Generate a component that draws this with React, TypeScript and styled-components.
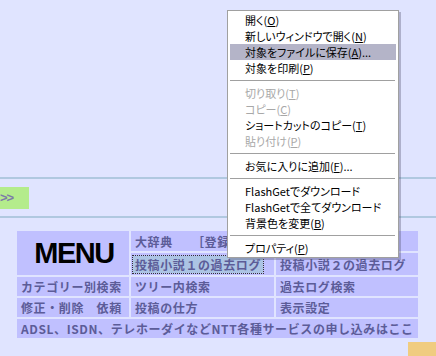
import styled, { createGlobalStyle } from "styled-components";

const GlobalStyle = createGlobalStyle`
  html, body {
    margin: 0;
    padding: 0;
    background: #e0e4ff;
  }
`;

const Page = styled.div`
  position: relative;
  width: 436px;
  height: 356px;
  overflow: hidden;
  background: #e0e4ff;
  font-family: "Noto Sans CJK JP", "Noto Sans", sans-serif;
`;

const TopSpace = styled.div`
  height: 177px;
`;

const Rule = styled.div<{ $gap: number }>`
  height: 2px;
  background: #b0c8e0;
  margin-bottom: ${({ $gap }) => $gap}px;
`;

const NavBar = styled.div`
  display: flex;
  margin-bottom: 7px;
`;

const NextTab = styled.div`
  width: 29px;
  height: 22px;
  background: #b4ec8c;
  color: #7c7ca8;
  font-family: "Liberation Sans", Arial, sans-serif;
  font-size: 13px;
  font-weight: bold;
  line-height: 22px;
  letter-spacing: -1px;
`;

const MenuGrid = styled.div`
  display: grid;
  grid-template-columns: 112px 143px 142px;
  grid-template-rows: 20px 22px 19px 19px 19px;
  gap: 2px;
  margin-left: 17px;
`;

const Cell = styled.div<{ $span?: number }>`
  grid-column: span ${({ $span }) => $span || 1};
  display: flex;
  align-items: center;
  padding-left: 4px;
  background: #c0c0ff;
  color: #5c5c98;
  font-size: 12px;
  font-weight: bold;
  letter-spacing: 0.6px;
  white-space: nowrap;
  overflow: hidden;
`;

const TitleCell = styled.div`
  grid-row: span 2;
  display: flex;
  align-items: center;
  justify-content: center;
  padding-left: 2px;
  background: #c0c0ff;
  color: #000;
  font-family: "Liberation Sans", Arial, sans-serif;
  font-size: 29px;
  font-weight: bold;
  letter-spacing: -1.5px;
`;

const FocusLink = styled.span`
  background: #acc4e4;
  outline: 1px dotted #333;
  outline-offset: 0;
  margin-left: -2px;
  padding: 0 2px;
`;

const FooterRow = styled.div`
  display: flex;
  justify-content: flex-end;
  margin-top: 4px;
`;

const Badge = styled.div`
  width: 28px;
  height: 14px;
  background: #f0cc80;
`;

const ContextMenu = styled.div`
  position: absolute;
  left: 227px;
  top: 10px;
  width: 170px;
  padding: 1px 0 1px;
  background: #fff;
  border: 1px solid #a0a0a0;
  box-shadow: 2px 2px 0 rgba(80, 80, 110, 0.35);
  font-family: "Noto Sans CJK JP", sans-serif;
  font-size: 11px;
  font-feature-settings: "palt";
`;

const MenuItem = styled.div<{ $active?: boolean; $disabled?: boolean }>`
  height: 16px;
  line-height: 16px;
  margin: 0 2px;
  padding-left: 15px;
  white-space: nowrap;
  color: ${({ $disabled }) => ($disabled ? "#a8a8a8" : "#000")};
  background: ${({ $active }) => ($active ? "#b4b4c8" : "transparent")};
`;

const Separator = styled.div`
  height: 1px;
  margin: 4px 3px 4px 2px;
  background: #a0a0a0;
`;

type Item = { label: string; key?: string; tail?: string; active?: boolean; disabled?: boolean } | "sep";

const items: Item[] = [
  { label: "開く(", key: "O", tail: ")" },
  { label: "新しいウィンドウで開く(", key: "N", tail: ")" },
  { label: "対象をファイルに保存(", key: "A", tail: ")...", active: true },
  { label: "対象を印刷(", key: "P", tail: ")" },
  "sep",
  { label: "切り取り(", key: "T", tail: ")", disabled: true },
  { label: "コピー(", key: "C", tail: ")", disabled: true },
  { label: "ショートカットのコピー(", key: "T", tail: ")" },
  { label: "貼り付け(", key: "P", tail: ")", disabled: true },
  "sep",
  { label: "お気に入りに追加(", key: "F", tail: ")..." },
  "sep",
  { label: "FlashGetでダウンロード" },
  { label: "FlashGetで全てダウンロード" },
  { label: "背景色を変更(", key: "B", tail: ")" },
  "sep",
  { label: "プロパティ(", key: "P", tail: ")" },
];

export default function App() {
  return (
    <Page>
      <GlobalStyle />
      <TopSpace />
      <Rule $gap={8} />
      <NavBar>
        <NextTab>&gt;&gt;</NextTab>
      </NavBar>
      <Rule $gap={13} />
      <MenuGrid>
        <TitleCell>MENU</TitleCell>
        <Cell $span={2}>大辞典　　［登録語一覧］</Cell>
        <Cell>
          <FocusLink>投稿小説１の過去ログ</FocusLink>
        </Cell>
        <Cell>投稿小説２の過去ログ</Cell>
        <Cell>カテゴリー別検索</Cell>
        <Cell>ツリー内検索</Cell>
        <Cell>過去ログ検索</Cell>
        <Cell>修正・削除　依頼</Cell>
        <Cell>投稿の仕方</Cell>
        <Cell>表示設定</Cell>
        <Cell $span={3}>ADSL、ISDN、テレホーダイなどNTT各種サービスの申し込みはここ</Cell>
      </MenuGrid>
      <FooterRow>
        <Badge />
      </FooterRow>

      <ContextMenu>
        {items.map((item, i) =>
          item === "sep" ? (
            <Separator key={i} />
          ) : (
            <MenuItem key={i} $active={item.active} $disabled={item.disabled}>
              {item.label}
              {item.key && <u>{item.key}</u>}
              {item.tail}
            </MenuItem>
          )
        )}
      </ContextMenu>
    </Page>
  );
}
